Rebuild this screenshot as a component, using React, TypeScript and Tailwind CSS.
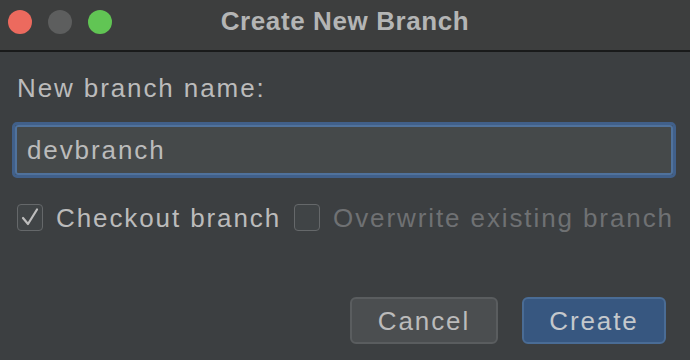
import React from 'react'

const font = { fontFamily: '"Liberation Sans", Arial, sans-serif' }

const CheckIcon = () => (
  <svg width="20" height="22" viewBox="0 0 20 22" fill="none">
    <path
      d="M3 12 L8 18 L17 3.5"
      stroke="#bdbdbd"
      strokeWidth="2.2"
      strokeLinecap="round"
      strokeLinejoin="round"
    />
  </svg>
)

const Checkbox = ({ checked }: { checked?: boolean }) => (
  <div className="flex h-[27px] w-[26px] shrink-0 items-center justify-center rounded-[4px] border-[1.5px] border-[#65686a] bg-[#404446]">
    {checked && <CheckIcon />}
  </div>
)

export default function App() {
  return (
    <div
      className="flex h-[360px] w-[690px] flex-col overflow-hidden bg-[#3c3f41] text-[26px] leading-[30px] tracking-[1.9px] text-[#bbbbbb]"
      style={font}
    >
      {/* title bar */}
      <div className="grid h-[52px] shrink-0 grid-cols-[1fr_auto_1fr] items-start border-b-2 border-[#191a1a] bg-[#3d3e3e]">
        <div className="flex gap-4 pl-2 pt-[10px]">
          <div className="h-6 w-6 rounded-full bg-[#ec6a5e]" />
          <div className="h-6 w-6 rounded-full bg-[#5d5e5e]" />
          <div className="h-6 w-6 rounded-full bg-[#61c554]" />
        </div>
        <div className="pt-[6px] font-bold tracking-[0.6px] text-[#b4b5b5]">
          Create New Branch
        </div>
        <div />
      </div>

      <div className="flex flex-1 flex-col pl-[17px] pr-[14px]">
        <div className="mt-[21px]">New branch name:</div>

        <div className="-ml-[5px] mt-[19px] h-[56px] rounded-[5px] border-[3px] border-[#41608a]">
          <div className="flex h-full items-center rounded-[3px] border-2 border-[#50729c] bg-[#45494a] pl-[10px]">
            devbranch
          </div>
        </div>

        <div className="mt-[23px] flex items-center">
          <Checkbox checked />
          <span className="ml-[13px] pt-[2px]">Checkout branch</span>
          <div className="ml-[13px]">
            <Checkbox />
          </div>
          <span className="ml-[13px] pt-[2px] text-[#6f7173]">
            Overwrite existing branch
          </span>
        </div>

        <div className="mt-auto mb-4 flex justify-end gap-6 pr-[10px]">
          <button className="flex h-[47px] w-[148px] items-center justify-center rounded-[6px] border-2 border-[#5a5d5f] bg-[#4b4e50] text-[#bbbbbb]">
            Cancel
          </button>
          <button className="flex h-[47px] w-[144px] items-center justify-center rounded-[6px] border-2 border-[#4a6c95] bg-[#375780] text-[#c4c8cc]">
            Create
          </button>
        </div>
      </div>
    </div>
  )
}
